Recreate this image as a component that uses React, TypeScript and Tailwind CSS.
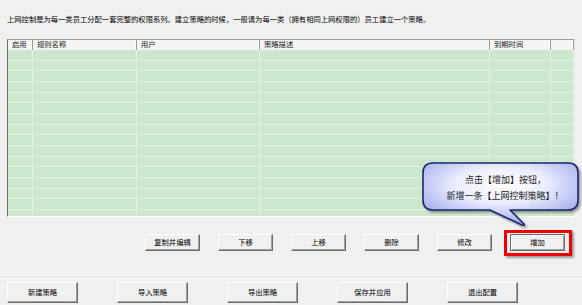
import React from 'react';

const FONT = { fontFamily: '"Noto Sans CJK SC", "Noto Sans", sans-serif' };

const columns = ['启用', '规则名称', '用户', '策略描述', '到期时间', ''];

const ClassicButton = ({ label, className = '', focused = false }: { label: string; className?: string; focused?: boolean }) => (
  <button
    className={
      'flex items-center justify-center bg-[#f0f0f0] text-[7.3px] leading-none text-black ' +
      (focused
        ? 'border border-[#6b6b6b] shadow-[inset_1px_1px_0_#ffffff,inset_-1px_-1px_0_#a0a0a0] '
        : 'border border-t-white border-l-white border-r-[#6b6b6b] border-b-[#6b6b6b] shadow-[inset_-1px_-1px_0_#a0a0a0] ') +
      className
    }
  >
    {label}
  </button>
);

const Callout = () => (
  <div className="absolute left-[418px] top-[158px] w-[164px] h-[72px]">
    <svg width="164" height="72" viewBox="0 0 164 72" className="absolute inset-0">
      <defs>
        <radialGradient id="bub" cx="50%" cy="35%" r="72%">
          <stop offset="0%" stopColor="#ffffff" />
          <stop offset="40%" stopColor="#eceefe" />
          <stop offset="100%" stopColor="#8f9ce8" />
        </radialGradient>
        <filter id="sh" x="-10%" y="-10%" width="130%" height="140%">
          <feDropShadow dx="2" dy="2" stdDeviation="1.2" floodColor="#000" floodOpacity="0.35" />
        </filter>
      </defs>
      <path
        d="M15 5 H150 Q160 5 160 15 V42 Q160 52 150 52 H92 L106 66 Q107 68 104 67 L72 52 H15 Q5 52 5 42 V15 Q5 5 15 5 Z"
        fill="url(#bub)"
        stroke="#1c2670"
        strokeWidth="1.6"
        strokeLinejoin="round"
        filter="url(#sh)"
      />
    </svg>
    <div className="absolute left-[5px] top-[14px] w-[164px] text-center text-[9px] leading-[16px] text-[#1a1a1a]">
      <div className="pl-[1px]">点击【增加】按钮，</div>
      <div>新增一条【上网控制策略】！</div>
    </div>
  </div>
);

export default function App() {
  const rows = Array.from({ length: 16 });
  return (
    <div className="relative w-[582px] h-[305px] overflow-hidden bg-[#f0f0f0]" style={FONT}>
      <p className="pl-[7px] pt-[14px] h-[24px] text-[7.3px] leading-[10px] text-black whitespace-nowrap">
        上网控制是为每一类员工分配一套完整的权限系列。建立策略的时候，一般请为每一类（拥有相同上网权限的）员工建立一个策略。
      </p>

      <div className="ml-[7px] mt-[15px] w-[568px] h-[178px] overflow-hidden border-t border-l border-t-[#a0a0a0] border-l-[#6b6b6b] border-r border-b border-r-[#e8e8e8] border-b-white bg-[#cbe8cc]">
        <div className="grid grid-cols-[25px_104px_123px_230px_61px_1fr] h-[10px] bg-[#f4f4f4]">
          {columns.map((c, i) => (
            <div
              key={i}
              className="flex items-center pl-[4px] text-[7.3px] leading-none text-[#222] border-r border-r-[#9a9a9a] shadow-[inset_-1px_0_0_#ffffff]"
            >
              {c}
            </div>
          ))}
        </div>
        <div className="grid grid-cols-[25px_104px_123px_230px_61px_1fr]">
          {rows.map((_, r) =>
            columns.map((_, i) => (
              <div key={r + '-' + i} className="h-[10.67px] border-r border-b border-[#e4f2e4]" />
            ))
          )}
        </div>
      </div>

      <div className="flex gap-[18px] ml-[145px] mt-[17px]">
        <ClassicButton label="复制并编辑" className="w-[55px] h-[17px]" />
        <ClassicButton label="下移" className="w-[55px] h-[17px]" />
        <ClassicButton label="上移" className="w-[55px] h-[17px]" />
        <ClassicButton label="删除" className="w-[55px] h-[17px]" />
        <ClassicButton label="修改" className="w-[55px] h-[17px]" />
        <div className="relative">
          <ClassicButton label="增加" focused className="w-[55px] h-[17px]" />
          <div className="absolute -left-[6px] -right-[7px] -top-[4px] -bottom-[5px] border-[3px] border-[#f20000] shadow-[2px_2px_2px_rgba(0,0,0,0.35)]" />
        </div>
      </div>

      <div className="mt-[26px] h-[2px] border-t border-t-[#e2e2e2] border-b border-b-white" />

      <div className="flex gap-[39px] ml-[7px] mt-[3px]">
        <ClassicButton label="新建策略" className="w-[71px] h-[21px]" />
        <ClassicButton label="导入策略" className="w-[71px] h-[21px]" />
        <ClassicButton label="导出策略" className="w-[71px] h-[21px]" />
        <ClassicButton label="保存并应用" className="w-[71px] h-[21px]" />
        <ClassicButton label="退出配置" className="w-[71px] h-[21px]" />
      </div>

      <Callout />
    </div>
  );
}
